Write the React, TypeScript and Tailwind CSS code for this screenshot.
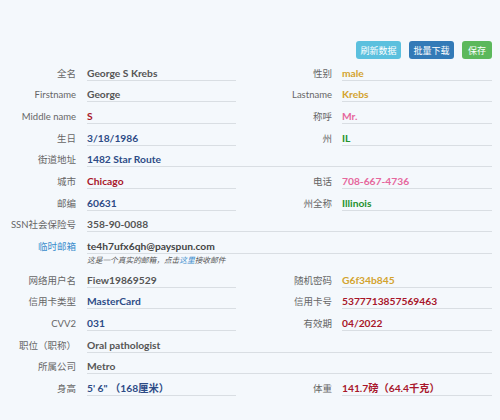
import React from "react";

const FONT = { fontFamily: '"Lato", "Noto Sans CJK SC", sans-serif' };

type Cell = { label: string; value: React.ReactNode; color: string; labelColor?: string };

const LabelCls = "text-right text-[9.5px] leading-[14px] shrink-0";
const ValueCls = "h-full flex items-end border-b border-[#d9dee3] text-[10.25px] leading-[14px] font-bold";

function Half({ cell, right }: { cell: Cell; right?: boolean }) {
  return (
    <div className="flex items-end h-full w-[250px]">
      <div
        className={`${LabelCls} ${right ? "w-[82px]" : "w-[76px]"} ${cell.labelColor ?? "text-[#666]"}`}
      >
        {cell.label}
      </div>
      <div className={`${right ? "ml-[10px] w-[150px]" : "ml-[11px] w-[149px]"} ${ValueCls} ${cell.color}`}>
        {cell.value}
      </div>
    </div>
  );
}

function Pair({ a, b }: { a: Cell; b: Cell }) {
  return (
    <div className="flex h-[21.67px]">
      <Half cell={a} />
      <Half cell={b} right />
    </div>
  );
}

function Full({ cell }: { cell: Cell }) {
  return (
    <div className="flex items-end h-[21.67px]">
      <div className={`${LabelCls} w-[76px] ${cell.labelColor ?? "text-[#666]"}`}>{cell.label}</div>
      <div className={`ml-[11px] w-[405px] ${ValueCls} ${cell.color}`}>{cell.value}</div>
    </div>
  );
}

const GRAY = "text-[#555]";
const NAVY = "text-[#2d4b86]";
const RED = "text-[#a8162a]";
const GOLD = "text-[#d3a32e]";
const PINK = "text-[#e6679d]";
const GREEN = "text-[#24922c]";

export default function App() {
  return (
    <div className="w-[500px] h-[420px] bg-[#f4f8fc] pt-[41px] overflow-hidden" style={FONT}>
      <div className="flex justify-end gap-[8px] pr-[8px] h-[18px]">
        <button className="h-[18px] w-[45px] rounded-[3px] bg-[#5bc0de] text-white text-[9px] leading-none">
          刷新数据
        </button>
        <button className="h-[18px] w-[45px] rounded-[3px] bg-[#337ab7] text-white text-[9px] leading-none">
          批量下载
        </button>
        <button className="h-[18px] w-[30px] rounded-[3px] bg-[#5cb85c] text-white text-[9px] leading-none">
          保存
        </button>
      </div>
      <Pair a={{ label: "全名", value: "George S Krebs", color: GRAY }} b={{ label: "性别", value: "male", color: GOLD }} />
      <Pair a={{ label: "Firstname", value: "George", color: GRAY }} b={{ label: "Lastname", value: "Krebs", color: GOLD }} />
      <Pair a={{ label: "Middle name", value: "S", color: RED }} b={{ label: "称呼", value: "Mr.", color: PINK }} />
      <Pair a={{ label: "生日", value: "3/18/1986", color: NAVY }} b={{ label: "州", value: "IL", color: GREEN }} />
      <Full cell={{ label: "街道地址", value: "1482 Star Route", color: NAVY }} />
      <Pair a={{ label: "城市", value: "Chicago", color: RED }} b={{ label: "电话", value: "708-667-4736", color: PINK }} />
      <Pair a={{ label: "邮编", value: "60631", color: NAVY }} b={{ label: "州全称", value: "Illinois", color: GREEN }} />
      <Full cell={{ label: "SSN社会保险号", value: "358-90-0088", color: GRAY }} />
      <Full cell={{ label: "临时邮箱", value: "te4h7ufx6qh@payspun.com", color: "text-[#444]", labelColor: "text-[#3c8dcc]" }} />
      <div className="h-[12px] pl-[87px] text-[7.7px] leading-[12px] italic text-[#555]">
        这是一个真实的邮箱，点击<span className="text-[#3c8dcc]">这里</span>接收邮件
      </div>
      <Pair a={{ label: "网络用户名", value: "Fiew19869529", color: GRAY }} b={{ label: "随机密码", value: "G6f34b845", color: GOLD }} />
      <Pair a={{ label: "信用卡类型", value: "MasterCard", color: NAVY }} b={{ label: "信用卡号", value: "5377713857569463", color: RED }} />
      <Pair a={{ label: "CVV2", value: "031", color: NAVY }} b={{ label: "有效期", value: "04/2022", color: RED }} />
      <Full cell={{ label: "职位（职称）", value: "Oral pathologist", color: GRAY }} />
      <Full cell={{ label: "所属公司", value: "Metro", color: GRAY }} />
      <Pair a={{ label: "身高", value: "5' 6\" （168厘米）", color: NAVY }} b={{ label: "体重", value: "141.7磅（64.4千克）", color: RED }} />
    </div>
  );
}
